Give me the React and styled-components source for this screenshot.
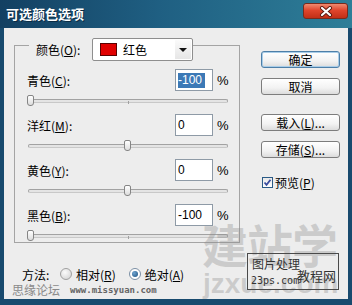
import React from 'react'
import styled, { createGlobalStyle } from 'styled-components'

const GlobalStyle = createGlobalStyle`
  body {
    margin: 0;
    background: #ededed;
  }
`;

const Window = styled.div`
  width: 352px;
  height: 305px;
  display: flex;
  flex-direction: column;
  background: #184a6e;
  overflow: hidden;
  font-family: "Liberation Sans", "Noto Sans CJK SC", sans-serif;
  font-size: 12px;
  color: #000;
`;

const TitleBar = styled.div`
  height: 28px;
  flex: none;
  display: flex;
  justify-content: space-between;
  align-items: flex-start;
  padding: 0 4px 0 6px;
  background: linear-gradient(90deg, #134062 0%, #1f5f82 45%, #2e7e98 100%);
`;

const Title = styled.div`
  margin-top: 6px;
  color: #fff;
  font-family: "Noto Sans CJK SC", sans-serif;
  font-weight: bold;
  font-size: 13px;
  line-height: 16px;
  text-shadow: 1px 1px 0 #0b2c44;
`;

const CloseButton = styled.div`
  margin-top: 3px;
  width: 43px;
  height: 14px;
  border: 1px solid #7a2a1c;
  border-radius: 3px;
  background: linear-gradient(#f08a70 0%, #e0452c 45%, #c22f17 100%);
  display: flex;
  align-items: center;
  justify-content: center;
`;

const Body = styled.div`
  flex: 1;
  margin: 0 4px 6px;
  background: #ededed;
  position: relative;
  overflow: hidden;
  display: flex;
`;

const LeftColumn = styled.div`
  width: 236px;
  display: flex;
  flex-direction: column;
`;

const Frame = styled.div`
  margin: 17px 0 0 10px;
  width: 226px;
  height: 198px;
  box-sizing: border-box;
  border: 1px solid #a4a4a4;
  display: flex;
  flex-direction: column;
`;

const FrameHeader = styled.div`
  margin: -8px 0 0 14px;
  padding-left: 7px;
  align-self: flex-start;
  display: flex;
  align-items: center;
  background: #ededed;
`;

const HeaderLabel = styled.span`
  width: 56px;
  font-family: "Noto Sans CJK SC", sans-serif;
`;

const Dropdown = styled.div`
  width: 101px;
  height: 23px;
  box-sizing: border-box;
  border: 1px solid #8e8e8e;
  border-radius: 2px;
  background: #fff;
  display: flex;
  align-items: center;
  padding-left: 7px;
`;

const Swatch = styled.span`
  width: 15px;
  height: 11px;
  background: ${p => p.color};
  border: 1px solid #5a0000;
  margin-right: 6px;
`;

const DropText = styled.span`
  flex: 1;
  font-family: "Noto Sans CJK SC", sans-serif;
`;

const DropArrow = styled.span`
  width: 16px;
  height: 19px;
  margin-right: 1px;
  display: flex;
  align-items: center;
  justify-content: center;
  background: linear-gradient(#fafafa, #e6e6e6);
  &::after {
    content: '';
    border-left: 4px solid transparent;
    border-right: 4px solid transparent;
    border-top: 4px solid #111;
  }
`;

const Rows = styled.div`
  margin-top: 8px;
  padding: 0 11px 0 12px;
  display: flex;
  flex-direction: column;
  gap: 7px;
`;

const Row = styled.div`
  display: flex;
  flex-direction: column;
`;

const RowTop = styled.div`
  height: 22px;
  display: flex;
  align-items: center;
`;

const Label = styled.span`
  flex: 1;
  font-family: "Noto Sans CJK SC", sans-serif;
  u { text-decoration: underline; }
`;

const ValueBox = styled.div`
  width: 38px;
  height: 22px;
  box-sizing: border-box;
  border: 1px solid #8e9aa6;
  background: #fff;
  display: flex;
  align-items: center;
  padding-left: 2px;
`;

const Value = styled.span`
  line-height: 15px;
  padding: 0 ${p => (p.selected ? 3 : 0)}px 0 0;
  background: ${p => (p.selected ? '#3c79b6' : 'transparent')};
  color: ${p => (p.selected ? '#fff' : '#000')};
`;

const Percent = styled.span`
  width: 11px;
  margin-left: 4px;
  font-size: 13px;
`;

const SliderArea = styled.div`
  height: 16px;
  position: relative;
`;

const Track = styled.div`
  position: absolute;
  left: 1px;
  right: 0;
  top: 8px;
  height: 4px;
  box-sizing: border-box;
  border: 1px solid #a2a2a2;
  border-bottom-color: #c8c8c8;
  border-radius: 2px;
  background: #e4e4e4;
  &::after {
    content: '';
    position: absolute;
    left: 50%;
    top: 1px;
    width: 1px;
    height: 3px;
    background: #a0a0a0;
  }
`;

const Thumb = styled.div`
  position: absolute;
  top: 4px;
  width: 7px;
  height: 11px;
  box-sizing: border-box;
  border: 1px solid #858585;
  border-radius: 2px 2px 3px 3px;
  background: linear-gradient(#ffffff, #dcdcdc);
`;

const MethodRow = styled.div`
  margin: 24px 0 0 18px;
  height: 14px;
  display: flex;
  align-items: center;
  font-family: "Noto Sans CJK SC", sans-serif;
`;

const MethodLabel = styled.span`
  width: 38px;
`;

const Radio = styled.span`
  width: 12px;
  height: 12px;
  box-sizing: border-box;
  border-radius: 50%;
  border: 1px solid ${p => (p.checked ? '#7b8fa4' : '#a0a0a0')};
  background: ${p => (p.checked ? '#fff' : 'radial-gradient(circle at 40% 35%, #fbfbfb, #cfcfcf)')};
  display: flex;
  align-items: center;
  justify-content: center;
  margin-right: 4px;
  &::after {
    content: '';
    display: ${p => (p.checked ? 'block' : 'none')};
    width: 6px;
    height: 6px;
    border-radius: 50%;
    background: radial-gradient(circle at 35% 35%, #6fa4d0, #1a4f7e);
  }
`;

const RadioText = styled.span`
  margin-right: ${p => p.gap || 0}px;
`;

const Footer = styled.div`
  margin: 1px 0 0 8px;
  display: flex;
  align-items: center;
  height: 15px;
`;

const FooterCn = styled.span`
  font-family: "Noto Sans CJK SC", sans-serif;
  color: #8a8a8a;
  font-size: 12px;
  margin-right: 10px;
`;

const FooterUrl = styled.span`
  font-family: "DejaVu Sans Mono", monospace;
  font-size: 9px;
  font-weight: bold;
  color: #666;
`;

const RightColumn = styled.div`
  flex: 1;
  padding: 23px 8px 0 21px;
  display: flex;
  flex-direction: column;
`;

const Button = styled.div`
  width: 79px;
  height: 17px;
  box-sizing: border-box;
  margin-top: ${p => p.gap || 0}px;
  border: 1px solid ${p => (p.primary ? '#4d7fa8' : '#7d7d7d')};
  box-shadow: ${p => (p.primary ? 'inset 0 0 0 1px #a9cde8' : 'none')};
  border-radius: 3px;
  background: linear-gradient(#ffffff 0%, #f2f2f2 60%, #dcdcdc 100%);
  display: flex;
  align-items: center;
  justify-content: center;
  font-family: "Noto Sans CJK SC", sans-serif;
  u { text-decoration: underline; }
`;

const CheckRow = styled.div`
  margin: 18px 0 0 1px;
  height: 12px;
  display: flex;
  align-items: center;
  font-family: "Noto Sans CJK SC", sans-serif;
`;

const CheckBox = styled.span`
  width: 11px;
  height: 11px;
  box-sizing: border-box;
  border: 1px solid #2a5a86;
  background: linear-gradient(#e8e8e8, #ffffff);
  margin-right: 2px;
  display: flex;
`;

const BigMark = styled.div`
  position: absolute;
  left: 198px;
  top: 192px;
  font-family: "Noto Sans CJK SC", sans-serif;
  font-weight: bold;
  font-size: 46px;
  line-height: 1;
  letter-spacing: -1px;
  color: rgba(140, 140, 140, 0.35);
  pointer-events: none;
`;

const BigUrl = styled.div`
  position: absolute;
  left: 199px;
  top: 242px;
  font-family: "Liberation Sans", sans-serif;
  font-weight: bold;
  font-size: 28px;
  line-height: 1;
  color: rgba(140, 140, 140, 0.35);
`;

const StampBox = styled.div`
  position: absolute;
  left: 243px;
  top: 225px;
  width: 92px;
  height: 37px;
  box-sizing: border-box;
  border: 1px solid #4a4a4a;
  color: #333;
`;

const StampText = styled.span`
  position: absolute;
  left: ${p => p.x}px;
  top: ${p => p.y}px;
  font-family: ${p => (p.mono ? '"DejaVu Sans Mono", monospace' : '"Noto Sans CJK SC", sans-serif')};
  font-size: ${p => p.size}px;
  line-height: 1;
  white-space: nowrap;
`;

const rows = [
  { name: '青色', key: 'C', value: -100, selected: true },
  { name: '洋红', key: 'M', value: 0 },
  { name: '黄色', key: 'Y', value: 0 },
  { name: '黑色', key: 'B', value: -100 },
];

function CloseIcon() {
  return (
    <svg width="14" height="11" viewBox="0 0 14 11">
      <path d="M3 2 L11 9 M11 2 L3 9" stroke="#5a1a10" strokeWidth="4" strokeLinecap="round" />
      <path d="M3 2 L11 9 M11 2 L3 9" stroke="#fff" strokeWidth="2.2" strokeLinecap="round" />
    </svg>
  )
}

function CheckIcon() {
  return (
    <svg width="9" height="9" viewBox="0 0 9 9">
      <path d="M1.5 4.5 L3.5 6.8 L7.5 1.8" fill="none" stroke="#3a4d9e" strokeWidth="1.8" />
    </svg>
  )
}

export default function App() {
  return (
    <Window>
      <GlobalStyle />
      <TitleBar>
        <Title>可选颜色选项</Title>
        <CloseButton><CloseIcon /></CloseButton>
      </TitleBar>
      <Body>
        <LeftColumn>
          <Frame>
            <FrameHeader>
              <HeaderLabel>颜色(<u>O</u>):</HeaderLabel>
              <Dropdown>
                <Swatch color="#e00000" />
                <DropText>红色</DropText>
                <DropArrow />
              </Dropdown>
            </FrameHeader>
            <Rows>
              {rows.map(r => (
                <Row key={r.key}>
                  <RowTop>
                    <Label>{r.name}(<u>{r.key}</u>):</Label>
                    <ValueBox>
                      <Value selected={r.selected}>{r.value}</Value>
                    </ValueBox>
                    <Percent>%</Percent>
                  </RowTop>
                  <SliderArea>
                    <Track />
                    <Thumb style={{ left: ((r.value + 100) / 200) * 194 }} />
                  </SliderArea>
                </Row>
              ))}
            </Rows>
          </Frame>
          <MethodRow>
            <MethodLabel>方法:</MethodLabel>
            <Radio />
            <RadioText gap={13}>相对(<u>R</u>)</RadioText>
            <Radio checked />
            <RadioText>绝对(<u>A</u>)</RadioText>
          </MethodRow>
          <Footer>
            <FooterCn>思缘论坛</FooterCn>
            <FooterUrl>www.missyuan.com</FooterUrl>
          </Footer>
        </LeftColumn>
        <RightColumn>
          <Button primary>确定</Button>
          <Button gap={10}>取消</Button>
          <Button gap={19}>载入(<u>L</u>)...</Button>
          <Button gap={10}>存储(<u>S</u>)...</Button>
          <CheckRow>
            <CheckBox><CheckIcon /></CheckBox>
            <span>预览(<u>P</u>)</span>
          </CheckRow>
        </RightColumn>
        <BigMark>建站学</BigMark>
        <BigUrl>jzxue.com</BigUrl>
        <StampBox>
          <StampText x={4} y={4} size={12}>图片处理</StampText>
          <StampText x={3} y={22} size={10} mono>23ps.com</StampText>
          <StampText x={49} y={15} size={13}>教程网</StampText>
        </StampBox>
      </Body>
    </Window>
  )
}
